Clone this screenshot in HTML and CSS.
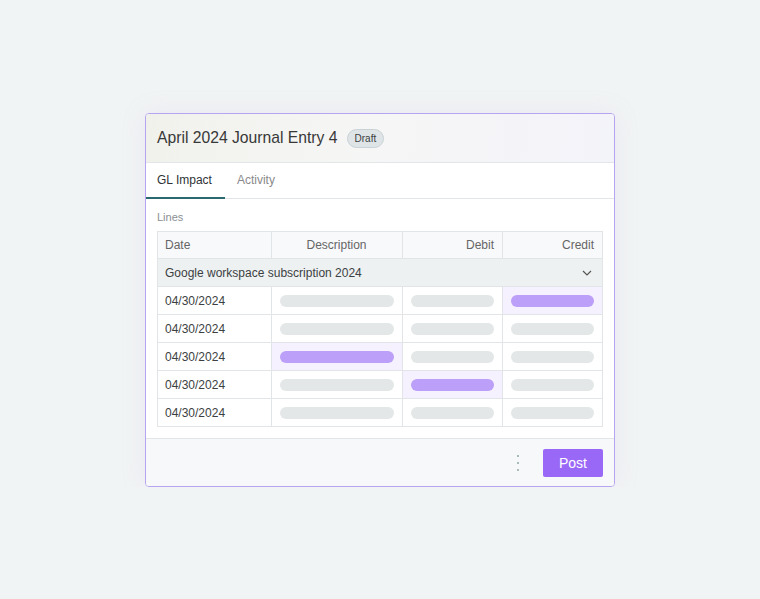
FILE: index.html
```html
<!DOCTYPE html>
<html>
<head>
    <title>April 2024 Journal Entry 4</title>
    <meta name="viewport" content="width=device-width, initial-scale=1.0">
    <link rel="stylesheet" href="styles.css">
</head>
<body>
    <div class="card">
        <div class="card-header">
            <h2 class="title">April 2024 Journal Entry 4</h2>
            <span class="badge">Draft</span>
        </div>

        <div class="tabs">
            <div class="tab active">GL Impact</div>
            <div class="tab">Activity</div>
        </div>

        <div class="card-body">
            <div class="section-label">Lines</div>
            <table class="lines">
                <thead>
                    <tr>
                        <th class="col-date">Date</th>
                        <th class="col-desc">Description</th>
                        <th class="col-debit">Debit</th>
                        <th class="col-credit">Credit</th>
                    </tr>
                </thead>
                <tbody>
                    <tr class="group">
                        <td colspan="4">
                            <div class="group-inner">
                                <span>Google workspace subscription 2024</span>
                                <svg class="chevron" width="10" height="6" viewBox="0 0 10 6"><path d="M1 1l4 4 4-4" fill="none" stroke="#555" stroke-width="1.2"/></svg>
                            </div>
                        </td>
                    </tr>
                    <tr>
                        <td>04/30/2024</td>
                        <td><div class="bar"></div></td>
                        <td><div class="bar"></div></td>
                        <td class="hl"><div class="bar purple"></div></td>
                    </tr>
                    <tr>
                        <td>04/30/2024</td>
                        <td><div class="bar"></div></td>
                        <td><div class="bar"></div></td>
                        <td><div class="bar"></div></td>
                    </tr>
                    <tr>
                        <td>04/30/2024</td>
                        <td class="hl"><div class="bar purple"></div></td>
                        <td><div class="bar"></div></td>
                        <td><div class="bar"></div></td>
                    </tr>
                    <tr>
                        <td>04/30/2024</td>
                        <td><div class="bar"></div></td>
                        <td class="hl"><div class="bar purple"></div></td>
                        <td><div class="bar"></div></td>
                    </tr>
                    <tr>
                        <td>04/30/2024</td>
                        <td><div class="bar"></div></td>
                        <td><div class="bar"></div></td>
                        <td><div class="bar"></div></td>
                    </tr>
                </tbody>
            </table>
        </div>

        <div class="card-footer">
            <div class="kebab"><span></span><span></span><span></span></div>
            <button class="post-btn">Post</button>
        </div>
    </div>
</body>
</html>
```

FILE: styles.css
```css
body {
    font-family: 'Liberation Sans', Arial, sans-serif;
    background: #f1f4f4;
    margin: 0;
    padding: 113px 0 0 145px;
    color: #333;
}
.card {
    width: 468px;
    border: 1px solid #b7a3f0;
    border-radius: 4px;
    background: #fff;
    overflow: hidden;
    box-shadow: 0 0 24px rgba(190, 170, 240, 0.15);
}
.card-header {
    height: 48px;
    display: flex;
    align-items: center;
    padding: 0 11px;
    background: linear-gradient(100deg, #f1f1ec 0%, #f6f6f6 50%, #f3f3fa 100%);
    border-bottom: 1px solid #e2e6e8;
}
.title {
    margin: 0;
    font-size: 15.7px;
    font-weight: 400;
    color: #383838;
}
.badge {
    margin-left: 9px;
    font-size: 10px;
    color: #3b3f42;
    background: #dfe5e7;
    border: 1px solid #c9d2d6;
    border-radius: 10px;
    padding: 3px 7px;
    line-height: 11px;
}
.tabs {
    display: flex;
    height: 35px;
    border-bottom: 1px solid #e2e6e8;
}
.tab {
    font-size: 12px;
    color: #8a8a8a;
    padding: 0 12px;
    display: flex;
    align-items: center;
    border-bottom: 2px solid transparent;
    margin-bottom: -1px;
}
.tab.active {
    color: #2f3336;
    border-bottom-color: #2a6970;
    padding: 0 13px 0 11px;
}
.card-body {
    padding: 12px 11px 11px;
}
.section-label {
    font-size: 11px;
    color: #8a8f92;
    margin-bottom: 8px;
}
.lines {
    width: 100%;
    border-collapse: collapse;
    font-size: 12px;
    color: #3c3f42;
}
.lines th, .lines td {
    border: 1px solid #e1e5e7;
    height: 28px;
    padding: 0 8px 0 7px;
    box-sizing: border-box;
}
.lines th {
    height: 27px;
    font-weight: 400;
    color: #666;
    background: #f8f9fa;
}
.col-date { width: 114px; text-align: left; }
.col-desc { width: 131px; text-align: center; }
.col-debit { width: 100px; text-align: right; }
.col-credit { text-align: right; }
.group td {
    background: #eef1f2;
}
.group-inner {
    display: flex;
    justify-content: space-between;
    align-items: center;
}
.chevron {
    margin-right: 2px;
}
.lines td .bar {
    margin-left: 1px;
}
.bar {
    height: 12px;
    border-radius: 6px;
    background: #e3e7e8;
}
.bar.purple {
    background: #bb9ff8;
}
.lines td.hl {
    background: #f6f1fe;
}
.card-footer {
    height: 47px;
    border-top: 1px solid #e2e6e8;
    background: #f7f8f9;
    display: flex;
    align-items: center;
    justify-content: flex-end;
    padding: 0 11px;
}
.kebab {
    display: flex;
    flex-direction: column;
    gap: 5px;
    margin-right: 24px;
}
.kebab span {
    width: 2px;
    height: 2px;
    border-radius: 50%;
    background: #8fa6a6;
}
.post-btn {
    font-family: inherit;
    font-size: 14px;
    color: #fff;
    background: #9a68f6;
    border: none;
    border-radius: 2px;
    width: 60px;
    height: 28px;
}
```
